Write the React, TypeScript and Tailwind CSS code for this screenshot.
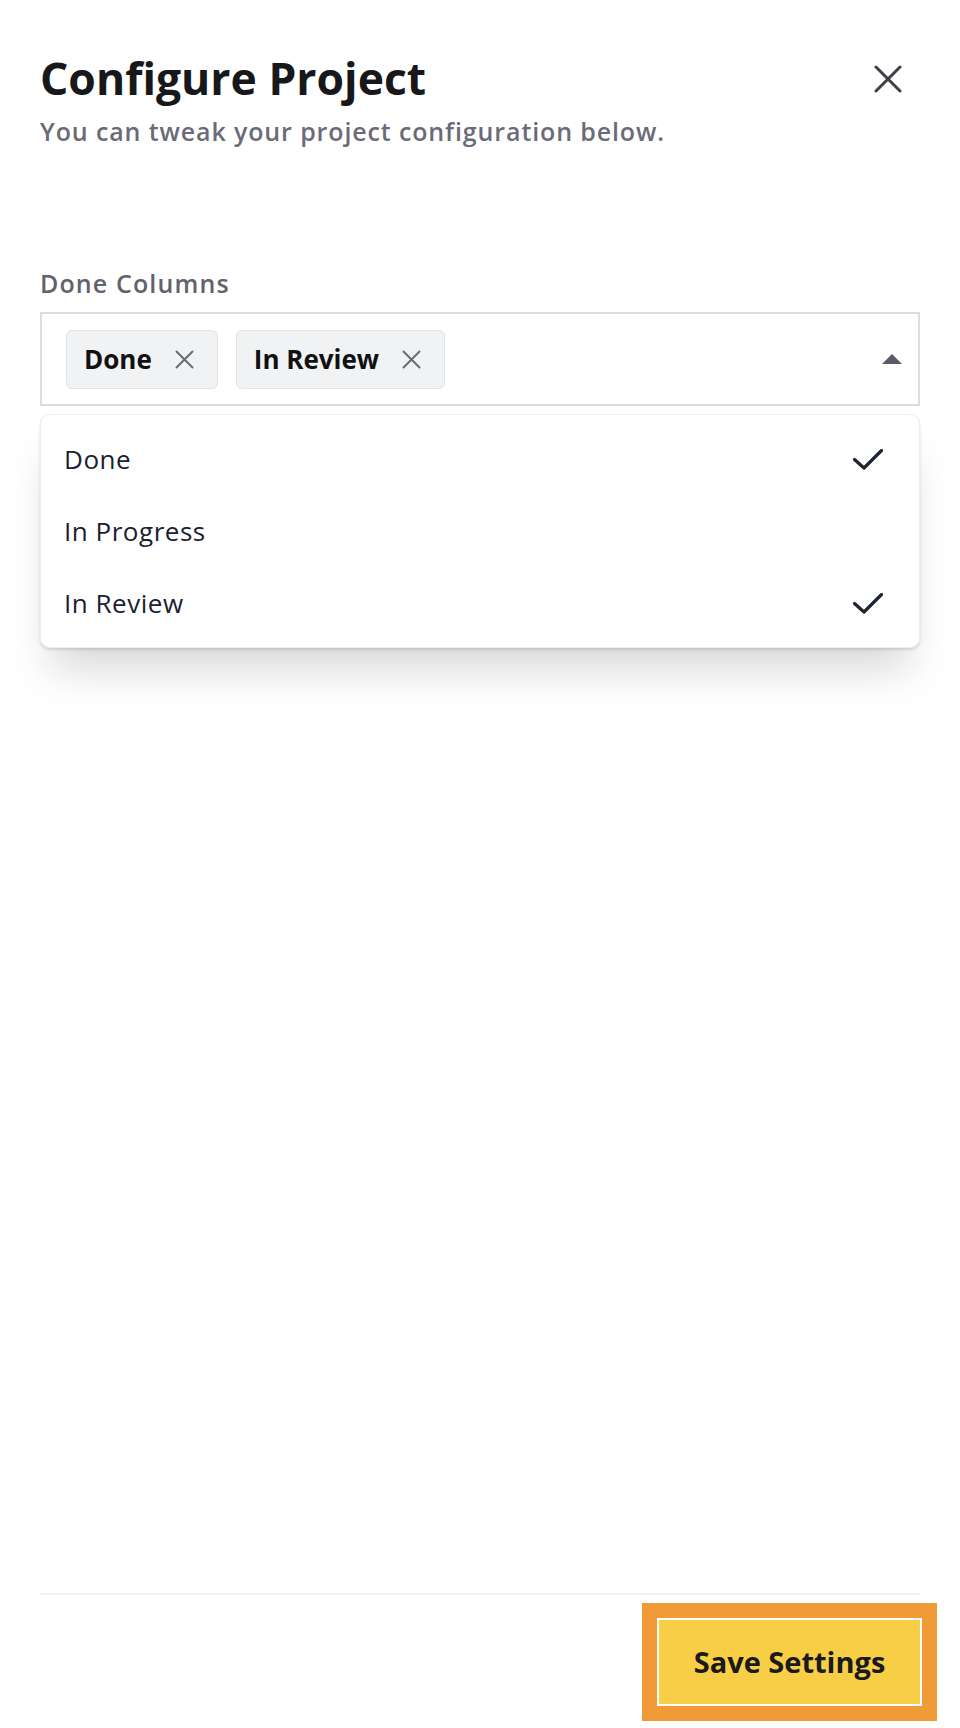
import { useState } from 'react'

const options = ['Done', 'In Progress', 'In Review']

function CloseIcon({ className }: { className?: string }) {
  return (
    <svg viewBox="0 0 28 28" fill="none" className={className}>
      <path d="M2 2L26 26M26 2L2 26" stroke="currentColor" strokeWidth="3" strokeLinecap="round" />
    </svg>
  )
}

function SmallX() {
  return (
    <svg width="19" height="19" viewBox="0 0 19 19" fill="none" className="text-[#6b6b73]">
      <path d="M1.5 1.5L17.5 17.5M17.5 1.5L1.5 17.5" stroke="currentColor" strokeWidth="2" strokeLinecap="round" />
    </svg>
  )
}

function Check() {
  return (
    <svg width="30" height="21" viewBox="0 0 30 21" fill="none" className="text-[#1e2433]">
      <path d="M1.5 10.5L11 19L28.5 1.5" stroke="currentColor" strokeWidth="3.2" strokeLinecap="round" strokeLinejoin="round" />
    </svg>
  )
}

export default function App() {
  const [selected, setSelected] = useState<string[]>(['Done', 'In Review'])

  const toggle = (o: string) =>
    setSelected((s) => (s.includes(o) ? s.filter((x) => x !== o) : [...s, o].sort()))

  return (
    <div
      className="flex h-[1728px] w-full flex-col bg-white px-10"
      style={{ fontFamily: '"Open Sans", Lato, sans-serif' }}
    >
      {/* Header */}
      <div className="flex items-start justify-between pt-[47px]">
        <div className="pt-[5px]">
          <h1 className="text-[44.5px] leading-[52px] font-bold text-[#18181b]">Configure Project</h1>
          <p className="mt-[12px] text-[25px] leading-[30px] font-semibold tracking-[0.035em] text-[#6b6b78]">
            You can tweak your project configuration below.
          </p>
        </div>
        <button className="flex h-16 w-16 items-center justify-center text-[#3f3f46]">
          <CloseIcon className="h-[28px] w-[28px]" />
        </button>
      </div>

      {/* Done columns select */}
      <div className="mt-[122px]">
        <label className="block text-[25px] leading-[30px] font-semibold tracking-[0.045em] text-[#62626d]">
          Done Columns
        </label>
        <div className="mt-[14px] flex h-[94px] items-center justify-between border-2 border-[#dcdce1] pr-[16px] pl-[24px]">
          <div className="flex gap-[18px]">
            {selected.map((s) => (
              <div
                key={s}
                className="flex h-[59px] items-center gap-[23px] rounded-md border border-[#e2e3e8] bg-[#f1f2f4] pr-[23px] pl-[17px]"
              >
                <span className="text-[26px] leading-[30px] font-bold text-[#111111]">{s}</span>
                <button onClick={() => toggle(s)}>
                  <SmallX />
                </button>
              </div>
            ))}
          </div>
          <svg width="20" height="10" viewBox="0 0 20 10" className="text-[#5c5c66]">
            <path d="M10 0L20 10H0Z" fill="currentColor" />
          </svg>
        </div>

        {/* Menu */}
        <div className="mt-[8px] rounded-[10px] border border-[#eeeef1] bg-white py-[8px] shadow-[0_32px_40px_-10px_rgba(0,0,0,0.15),0_2px_3px_rgba(0,0,0,0.12)]">
          {options.map((o) => {
            const on = selected.includes(o)
            return (
              <div
                key={o}
                onClick={() => toggle(o)}
                className="flex h-[72px] cursor-pointer items-center justify-between pr-[36px] pl-[23px]"
              >
                <span className="text-[26px] leading-[30px] tracking-[0.02em] text-[#1a2133]">{o}</span>
                {on && <Check />}
              </div>
            )
          })}
        </div>
      </div>

      <div className="flex-1" />

      {/* Footer */}
      <div className="flex justify-end border-t-2 border-[#f2f2f2] pt-[25px] pb-[24px]">
        <button className="flex h-[84px] w-[261px] items-center justify-center bg-[#f7ce46] text-[29px] font-bold text-[#1a1a1a] ring-[15px] ring-[#f09a38] ring-offset-2 ring-offset-white">
          Save Settings
        </button>
      </div>
    </div>
  )
}
